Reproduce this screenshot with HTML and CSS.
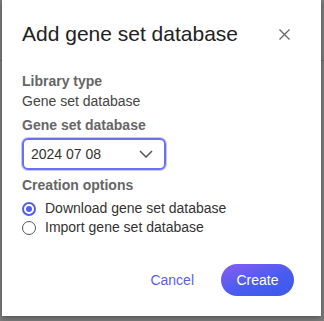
FILE: index.html
```html
<!DOCTYPE html>
<html lang="en">
<head>
    <meta charset="UTF-8">
    <title>Add gene set database</title>
    <link rel="stylesheet" href="styles.css">
</head>
<body>
    <div class="backdrop">
        <span class="bg-line bg-line-left"></span>
        <span class="bg-line bg-line-right"></span>
        <div class="dialog">
            <div class="dialog-header">
                <h2>Add gene set database</h2>
                <button class="close-button" aria-label="Close">
                    <svg width="11" height="11" viewBox="0 0 11 11">
                        <path d="M0.5 0.5 L10.5 10.5 M10.5 0.5 L0.5 10.5" stroke="#666" stroke-width="1.3" fill="none"/>
                    </svg>
                </button>
            </div>

            <div class="dialog-body">
                <p class="field-label">Library type</p>
                <p class="field-value">Gene set database</p>

                <p class="field-label">Gene set database</p>
                <div class="select-box">
                    <span>2024 07 08</span>
                    <svg width="14" height="8" viewBox="0 0 14 8">
                        <path d="M1 1 L7 7 L13 1" stroke="#555" stroke-width="1.5" fill="none"/>
                    </svg>
                </div>

                <p class="field-label options-label">Creation options</p>
                <label class="radio-row first-option">
                    <span class="radio checked"></span>
                    Download gene set database
                </label>
                <label class="radio-row">
                    <span class="radio"></span>
                    Import gene set database
                </label>
            </div>

            <div class="dialog-footer">
                <button class="cancel-button">Cancel</button>
                <button class="create-button">Create</button>
            </div>
        </div>
    </div>
</body>
</html>
```

FILE: styles.css
```css
* {
    margin: 0;
    padding: 0;
    box-sizing: border-box;
}

body, html {
    width: 100%;
    height: 100%;
    overflow: hidden;
    background: #7d7d7d;
    font-family: 'Liberation Sans', Arial, sans-serif;
    color: #333;
}

.backdrop {
    position: relative;
    width: 324px;
    height: 321px;
    padding-left: 2px;
}

/* faint lines of the page under the overlay */
.bg-line {
    position: absolute;
    top: 60px;
    height: 1px;
    background: #6a6a6a;
}

.bg-line-left {
    left: 0;
    width: 2px;
}

.bg-line-right {
    right: 0;
    width: 3px;
}

.dialog {
    position: relative;
    width: 319px;
    height: 316px;
    background: #fff;
    box-shadow: 0 2px 6px rgba(0, 0, 0, 0.35);
    display: flex;
    flex-direction: column;
    padding: 0 20px;
}

/* header */
.dialog-header {
    display: flex;
    justify-content: space-between;
    align-items: center;
    padding-top: 22px;
}

.dialog-header h2 {
    font-size: 21px;
    line-height: 24px;
    font-weight: normal;
    color: #222;
}

.close-button {
    background: none;
    border: none;
    width: 11px;
    height: 11px;
    margin-right: 11px;
    display: flex;
}

/* body */
.dialog-body {
    padding-top: 25px;
    display: flex;
    flex-direction: column;
    font-size: 14px;
    line-height: 20px;
}

.field-label {
    font-weight: bold;
    color: #666;
}

.field-value {
    color: #444;
    margin-bottom: 4px;
}

.select-box {
    width: 144px;
    height: 32px;
    margin: 3px 0 5px 0;
    border: 2px solid #6b70f0;
    border-radius: 6px;
    box-shadow: 0 0 0 1px #c5c7fb;
    display: flex;
    align-items: center;
    justify-content: space-between;
    padding: 0 11px 0 7px;
    color: #333;
}

.radio-row {
    display: flex;
    align-items: center;
    gap: 9px;
    color: #333;
    height: 19px;
    line-height: 19px;
}

.first-option {
    margin-top: 4px;
}

.radio {
    width: 14px;
    height: 14px;
    border: 1px solid #555;
    border-radius: 50%;
    position: relative;
}

.radio.checked {
    border: 2px solid #5060e8;
}

.radio.checked::after {
    content: "";
    position: absolute;
    top: 2px;
    left: 2px;
    width: 6px;
    height: 6px;
    border-radius: 50%;
    background: #5060e8;
}

/* footer */
.dialog-footer {
    margin-top: auto;
    margin-bottom: 20px;
    margin-right: 7px;
    display: flex;
    justify-content: flex-end;
    align-items: center;
    gap: 27px;
}

.cancel-button {
    background: none;
    border: none;
    color: #5a5fe8;
    font-size: 14px;
    font-family: inherit;
}

.create-button {
    width: 73px;
    height: 32px;
    border: none;
    border-radius: 16px;
    background: linear-gradient(160deg, #8a5cf0 0%, #4a5cf0 55%, #3a5ae8 100%);
    color: #fff;
    font-size: 14px;
    font-family: inherit;
}
```
